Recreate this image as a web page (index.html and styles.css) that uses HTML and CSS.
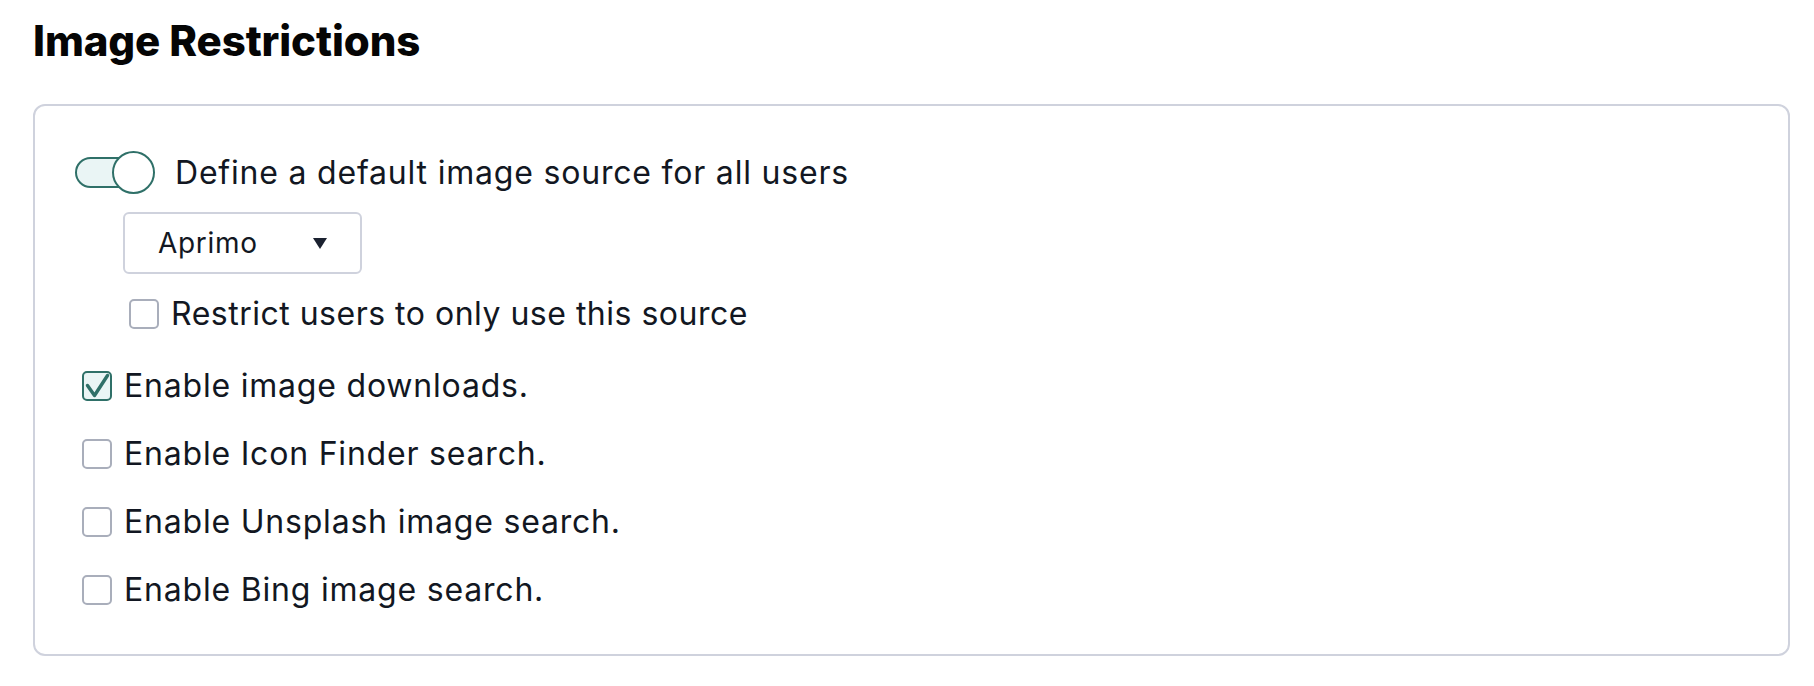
FILE: index.html
```html
<!DOCTYPE html>
<html lang="en">
<head>
<meta charset="utf-8">
<title>Image Restrictions</title>
<link rel="stylesheet" href="styles.css">
</head>
<body>
<main class="page">
  <h1 class="title">Image Restrictions</h1>
  <section class="card">
    <div class="toggle-row">
      <span class="toggle" role="switch" aria-checked="true">
        <span class="toggle-track"></span>
        <span class="toggle-knob"></span>
      </span>
      <span class="label">Define a default image source for all users</span>
    </div>
    <div class="sub">
      <div class="select">
        <span class="select-value">Aprimo</span>
        <span class="select-arrow"></span>
      </div>
      <label class="check-row sub-check">
        <span class="box"></span>
        <span class="label">Restrict users to only use this source</span>
      </label>
    </div>
    <div class="list">
      <label class="check-row">
        <span class="box checked">
          <svg viewBox="0 0 30 30" width="30" height="30" aria-hidden="true"><path d="M5.5 14.5 L12.5 24.5 L25.5 4.5" fill="none" stroke="#2f7068" stroke-width="3.4" stroke-linecap="round" stroke-linejoin="round"/></svg>
        </span>
        <span class="label">Enable image downloads.</span>
      </label>
      <label class="check-row">
        <span class="box"></span>
        <span class="label">Enable Icon Finder search.</span>
      </label>
      <label class="check-row">
        <span class="box"></span>
        <span class="label">Enable Unsplash image search.</span>
      </label>
      <label class="check-row">
        <span class="box"></span>
        <span class="label">Enable Bing image search.</span>
      </label>
    </div>
  </section>
</main>
</body>
</html>
```
FILE: styles.css
```css
html, body {
  margin: 0;
  background: #ffffff;
}

.page {
  padding: 16px 24px 31px 33px;
  font-family: "Inter", "Noto Sans", sans-serif;
  color: #121722;
}

.title {
  margin: 0;
  font-size: 42px;
  line-height: 50px;
  font-weight: 800;
  color: #050505;
  letter-spacing: -0.1px;
}

.card {
  margin-top: 38px;
  border: 2px solid #cfd2dd;
  border-radius: 12px;
  padding: 45px 40px 49px 40px;
}

.label {
  font-size: 32px;
  line-height: 38px;
  letter-spacing: 0.8px;
}

.sub-check .label {
  letter-spacing: 0.5px;
}

.toggle-row {
  display: flex;
  align-items: center;
  gap: 20px;
  height: 43px;
}

.toggle {
  position: relative;
  width: 80px;
  height: 43px;
  flex: none;
}

.toggle-track {
  position: absolute;
  left: 0;
  top: 6px;
  width: 70px;
  height: 31px;
  box-sizing: border-box;
  border: 2px solid #2f7068;
  border-radius: 16px;
  background: #eaf5f5;
}

.toggle-knob {
  position: absolute;
  right: 0;
  top: 0;
  width: 43px;
  height: 43px;
  box-sizing: border-box;
  border: 2px solid #2f7068;
  border-radius: 50%;
  background: #ffffff;
}

.sub {
  display: flex;
  flex-direction: column;
  align-items: flex-start;
  padding-left: 48px;
  margin-top: 18px;
}

.select {
  box-sizing: border-box;
  width: 239px;
  height: 62px;
  border: 2px solid #cfd2dd;
  border-radius: 6px;
  display: flex;
  align-items: center;
  justify-content: space-between;
  padding: 0 33px 0 33px;
}

.select-value {
  font-size: 28px;
  letter-spacing: 0.7px;
}

.select-arrow {
  width: 0;
  height: 0;
  border-left: 7.5px solid transparent;
  border-right: 7.5px solid transparent;
  border-top: 11px solid #1b2130;
}

.check-row {
  display: flex;
  align-items: center;
  gap: 12px;
  height: 30px;
}

.sub-check {
  margin-top: 25px;
  margin-left: 6px;
}

.box {
  box-sizing: border-box;
  width: 30px;
  height: 30px;
  flex: none;
  border: 2px solid #a9aebb;
  border-radius: 5px;
  background: #ffffff;
  display: flex;
}

.box svg {
  display: block;
  margin: -2px;
}

.box.checked {
  border-color: #2f7068;
  background: #eaf5f5;
}

.list {
  display: flex;
  flex-direction: column;
  gap: 38px;
  margin-top: 42px;
  padding-left: 7px;
}
```
